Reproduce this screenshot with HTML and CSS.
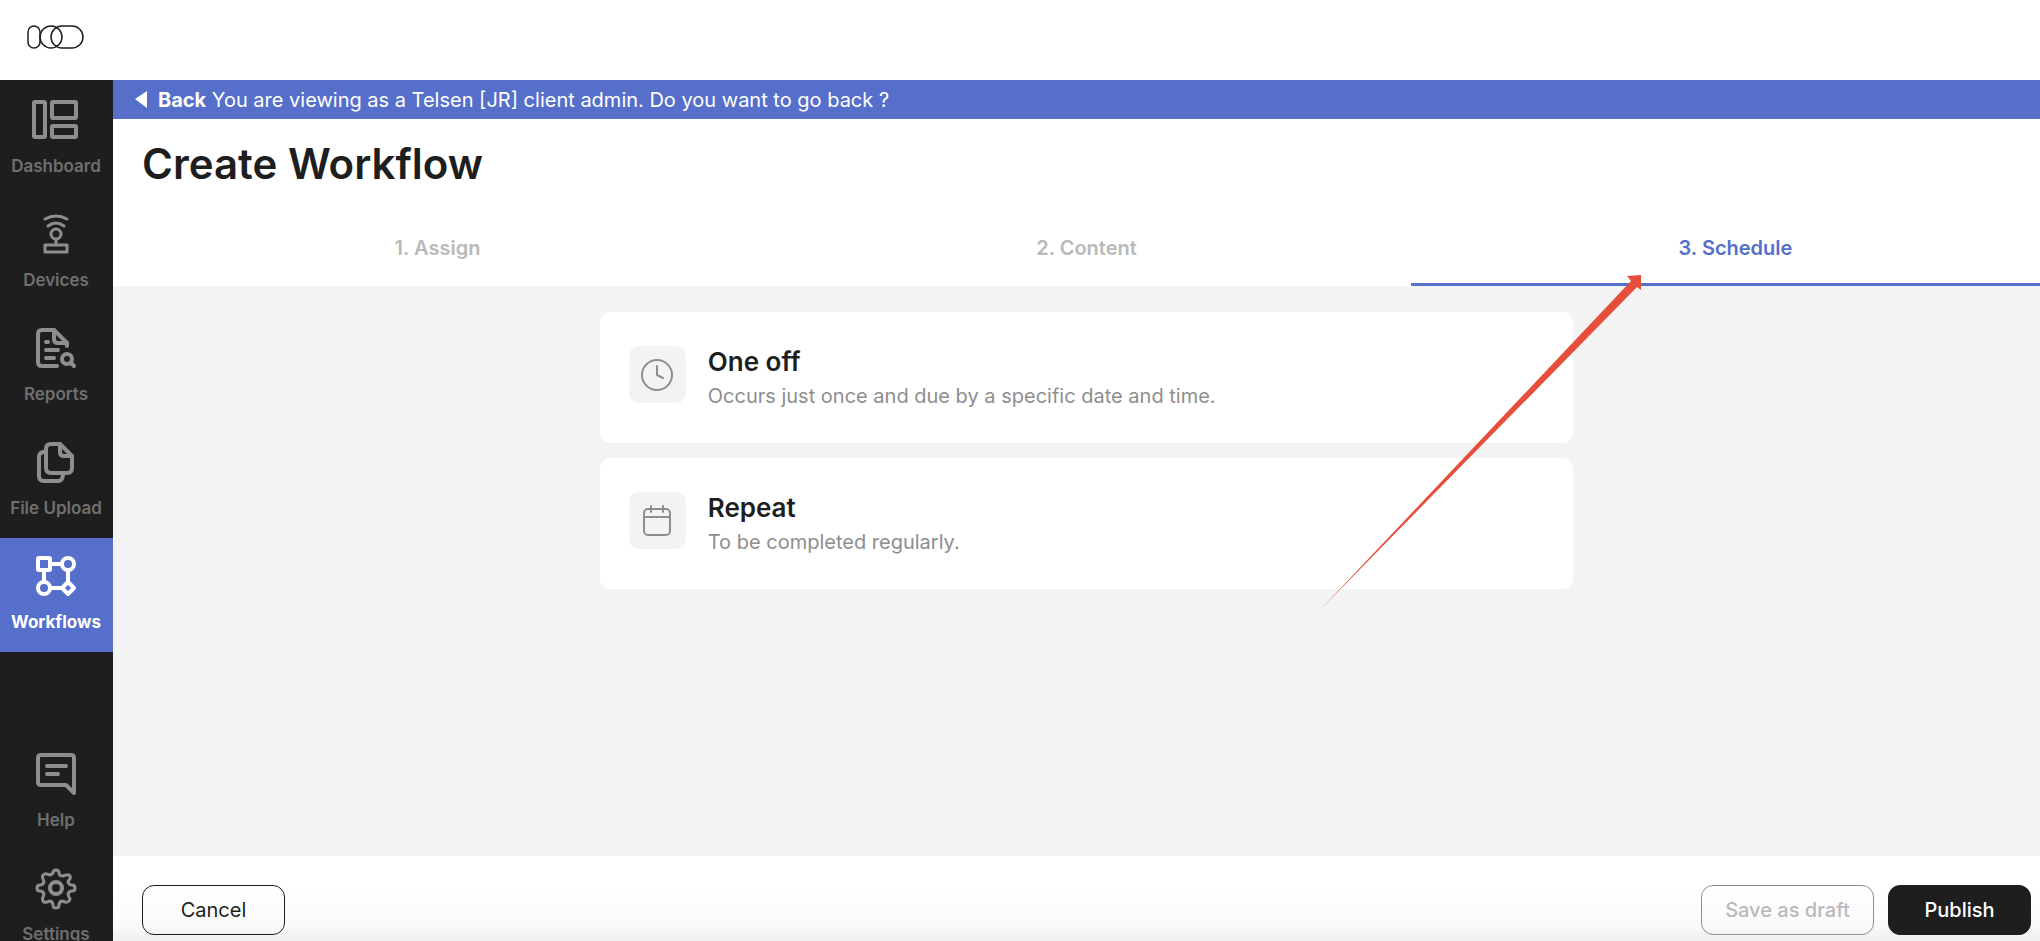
FILE: index.html
```html
<!DOCTYPE html>
<html lang="en">
<head>
    <meta charset="UTF-8">
    <meta name="viewport" content="width=device-width, initial-scale=1.0">
    <title>Create Workflow</title>
    <link rel="stylesheet" href="styles.css">
</head>
<body>
    <header class="topbar">
        <a class="logo" href="#" aria-label="Home">
            <svg width="58" height="26" viewBox="0 0 58 26">
                <rect x="1" y="2" width="12" height="22" rx="6"/>
                <circle cx="24" cy="13" r="11"/>
                <rect x="24" y="2" width="32" height="22" rx="11"/>
            </svg>
        </a>
    </header>
    <div class="layout">
        <nav class="sidebar">
            <a class="nav-item" href="#">
                <svg class="icon wide" viewBox="0 0 48 40">
                    <rect x="2" y="2" width="11" height="35" rx="1"/>
                    <rect x="20" y="2" width="24" height="16" rx="1"/>
                    <rect x="20" y="26" width="24" height="11" rx="1"/>
                </svg>
                <span>Dashboard</span>
            </a>
            <a class="nav-item" href="#">
                <svg class="icon" viewBox="0 0 40 40">
                    <g class="thin">
                        <path d="M9 5Q20 -1 31 5"/>
                        <path d="M12 12Q20 6 28 12"/>
                        <circle cx="20" cy="20" r="5"/>
                        <path d="M20 25v6"/>
                        <rect x="9" y="31" width="22" height="7"/>
                    </g>
                </svg>
                <span>Devices</span>
            </a>
            <a class="nav-item" href="#">
                <svg class="icon" viewBox="0 0 40 40">
                    <path d="M21 38H6Q2 38 2 34V6Q2 2 6 2H18L31 15V18"/>
                    <path d="M18 2V11Q18 15 22 15H31"/>
                    <path d="M10 14h2M10 22h12M10 30h8"/>
                    <circle cx="31" cy="31" r="5"/>
                    <path d="M35 35l3 3"/>
                </svg>
                <span>Reports</span>
            </a>
            <a class="nav-item" href="#">
                <svg class="icon" viewBox="0 0 40 40">
                    <path d="M15 2H24L36 14V26Q36 31 31 31H15Q10 31 10 26V7Q10 2 15 2Z"/>
                    <path d="M24 2V10Q24 14 28 14H36"/>
                    <path d="M10 10H7Q3 11 3 15V34Q3 39 8 39H23Q27 38 27 32"/>
                </svg>
                <span>File Upload</span>
            </a>
            <a class="nav-item active" href="#">
                <svg class="icon" viewBox="0 0 40 40">
                    <rect x="2" y="2" width="12" height="12" rx="1"/>
                    <circle cx="32" cy="8" r="6"/>
                    <circle cx="8" cy="32" r="6"/>
                    <path d="M32 26l6 6-6 6-6-6z"/>
                    <path d="M14 8h12M8 14v12M14 32h12M32 14v12"/>
                </svg>
                <span>Workflows</span>
            </a>
            <a class="nav-item help" href="#">
                <svg class="icon" viewBox="0 0 40 40">
                    <path d="M5 1H35Q38 1 38 4V39L30 31H5Q2 31 2 28V4Q2 1 5 1Z"/>
                    <path d="M11 12h19M11 20h11"/>
                </svg>
                <span>Help</span>
            </a>
            <a class="nav-item" href="#">
                <svg class="icon" viewBox="0 0 40 40">
                    <g class="thin">
                        <path d="M17 5q0-3 3-3t3 3q0 3 4 3l3-1q3-1 4 1t-1 4l-1 2q1 3 4 3 3 0 3 3t-3 3q-3 0-4 3l1 3q2 2 0 4t-4 1l-3-1q-3 1-3 4t-3 3-3-3q0-3-3-4l-3 1q-3 1-4-1t0-4l1-3q-1-3-4-3t-3-3 3-3q3 0 4-3l-1-3q-1-3 0-4 2-2 4-1l3 1q3-1 3-3z"/>
                    </g>
                    <circle cx="20" cy="20" r="6"/>
                </svg>
                <span>Settings</span>
            </a>
        </nav>
        <main class="main">
            <div class="banner">
                <svg class="back-arrow" width="12" height="18" viewBox="0 0 12 18"><path d="M12 0v17L0 8z"/></svg>
                <p><a href="#">Back</a> You are viewing as a Telsen [JR] client admin. Do you want to go back ?</p>
            </div>
            <h1>Create Workflow</h1>
            <div class="tabs" role="tablist">
                <button class="tab" role="tab">1. Assign</button>
                <button class="tab" role="tab">2. Content</button>
                <button class="tab active" role="tab" aria-selected="true">3. Schedule</button>
            </div>
            <section class="content">
                <button class="card">
                    <span class="tile">
                        <svg width="32" height="32" viewBox="0 0 32 32">
                            <circle cx="16" cy="16" r="15"/>
                            <path d="M16 7v9l6 3"/>
                        </svg>
                    </span>
                    <span class="card-text">
                        <strong>One off</strong>
                        <span>Occurs just once and due by a specific date and time.</span>
                    </span>
                </button>
                <button class="card">
                    <span class="tile">
                        <svg width="32" height="32" viewBox="0 0 32 32">
                            <rect x="3" y="4" width="26" height="26" rx="4"/>
                            <path d="M3 12h26M10 1v6M22 1v6"/>
                        </svg>
                    </span>
                    <span class="card-text">
                        <strong>Repeat</strong>
                        <span>To be completed regularly.</span>
                    </span>
                </button>
            </section>
            <footer class="actions">
                <button class="btn cancel">Cancel</button>
                <button class="btn draft">Save as draft</button>
                <button class="btn publish">Publish</button>
            </footer>
        </main>
    </div>
    <!-- pointer to the active tab -->
    <svg class="pointer" width="322" height="335" viewBox="0 0 322 335">
        <path d="M0 335L311 6 307 1 321 0V15L317 12Z"/>
    </svg>
</body>
</html>
```

FILE: styles.css
```css
* {
    box-sizing: border-box;
}
body {
    margin: 0;
    height: 100vh;
    display: flex;
    flex-direction: column;
    overflow: hidden;
    position: relative;
    font-family: Inter, "Liberation Sans", sans-serif;
    font-size: 20px;
    color: #1e1e1e;
    background: #fff;
}
button {
    font: inherit;
    cursor: pointer;
}
a {
    color: inherit;
    text-decoration: none;
}
svg {
    fill: none;
    stroke: currentColor;
    stroke-linecap: round;
    stroke-linejoin: round;
}
.topbar {
    flex: none;
    height: 80px;
    padding: 24px 27px;
}
.logo svg {
    display: block;
    stroke-width: 1.5;
}
.layout {
    flex: 1;
    min-height: 0;
    display: flex;
}
.sidebar {
    flex: none;
    width: 113px;
    padding-top: 2px;
    overflow: hidden;
    background: #1e1e1e;
    color: #6f6f6f;
}
.nav-item {
    display: flex;
    flex-direction: column;
    align-items: center;
    height: 114px;
    padding: 18px 1px 0 0;
    font-size: 17px;
    line-height: 20px;
    font-weight: 600;
    white-space: nowrap;
}
.nav-item.active {
    background: #566fcb;
    color: #fff;
    font-weight: 700;
}
.nav-item.help {
    margin-top: 84px;
}
.icon {
    width: 40px;
    height: 40px;
    margin-bottom: 16px;
    overflow: visible;
    color: #8e8e8e;
    stroke-width: 4;
}
.icon.wide {
    width: 48px;
}
.thin {
    stroke-width: 3;
}
.active .icon {
    color: #fff;
}
/* runs 20px past the window edge */
.main {
    flex: none;
    width: calc(100% - 93px);
    display: flex;
    flex-direction: column;
}
.banner {
    display: flex;
    align-items: center;
    gap: 11px;
    height: 39px;
    padding-left: 22px;
    background: #566fcb;
    color: #fff;
}
.banner p {
    margin: 0;
}
.banner a {
    font-weight: 700;
}
.back-arrow {
    fill: #fff;
    stroke: none;
}
h1 {
    margin: 0;
    padding: 17px 29px 0;
    font-size: 42px;
    line-height: 56px;
    font-weight: 600;
}
.tabs {
    display: flex;
    margin-top: 16px;
}
.tab {
    flex: 1;
    height: 78px;
    padding: 4px 0 0;
    border: 0;
    border-bottom: 3px solid transparent;
    background: none;
    color: #b9b9b9;
    font-weight: 600;
}
.tab.active {
    color: #566fcb;
    border-color: #566fcb;
}
.content {
    flex: 1;
    display: flex;
    flex-direction: column;
    align-items: center;
    gap: 15px;
    padding-top: 26px;
    background: #f3f3f3;
}
.card {
    display: flex;
    align-items: center;
    gap: 22px;
    width: 50%;
    height: 131px;
    padding: 0 29px 6px;
    border: 0;
    border-radius: 10px;
    background: #fff;
    color: #1e1e1e;
    text-align: left;
}
.tile {
    display: flex;
    align-items: center;
    justify-content: center;
    width: 57px;
    height: 57px;
    border-radius: 10px;
    background: #f3f3f3;
    color: #8e8e8e;
}
.tile svg {
    stroke-width: 2;
}
.card-text {
    display: flex;
    flex-direction: column;
    gap: 4px;
    padding-top: 8px;
    color: #8e8e8e;
    line-height: 30px;
}
.card-text strong {
    color: #1e1e1e;
    font-size: 26px;
    font-weight: 600;
}
.actions {
    display: flex;
    gap: 14px;
    height: 85px;
    padding: 29px 29px 0;
    background: linear-gradient(#fff 40%, #fafafa 80%, #f0f0f0);
}
.btn {
    height: 50px;
    width: 143px;
    border: 1px solid #1e1e1e;
    border-radius: 12px;
    background: none;
    color: #1e1e1e;
}
.btn.draft {
    width: 173px;
    margin-left: auto;
    border-color: #8e8e8e;
    color: #b9b9b9;
    font-weight: 500;
}
.btn.publish {
    background: #1e1e1e;
    color: #fff;
    font-weight: 500;
}
.pointer {
    position: absolute;
    left: 1320px;
    top: 275px;
    fill: #e54f3b;
    stroke: none;
}
```
